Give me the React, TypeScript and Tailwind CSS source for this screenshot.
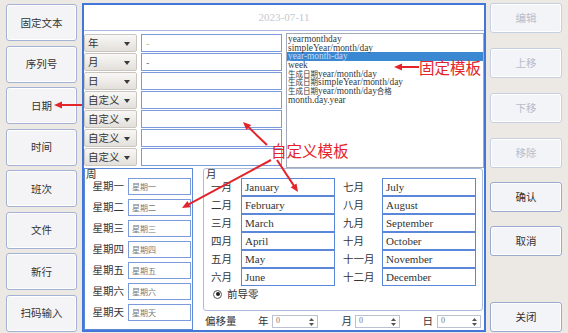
import React from "react";

const RED = "#e3242b";

function LBtn({ children }: { children: React.ReactNode }) {
  return (
    <div className="w-[71px] h-[37px] shrink-0 rounded-[3px] border border-[#a3b2d3] bg-[#f4f4f7] shadow-[inset_0_0_0_1px_#ffffff] flex items-center justify-center text-[10.5px] text-[#333]">
      {children}
    </div>
  );
}

function RBtn({ children, disabled, mt }: { children: React.ReactNode; disabled?: boolean; mt: string }) {
  return (
    <div
      className={
        mt +
        " w-[72px] h-[30px] shrink-0 rounded-[3px] border flex items-center justify-center text-[10.5px] shadow-[inset_0_0_0_1px_#ffffff] " +
        (disabled ? "border-[#c6cfe2] bg-[#f3f4f7] text-[#b7bdcb]" : "border-[#9aaacd] bg-[#f3f4f8] text-[#333]")
      }
    >
      {children}
    </div>
  );
}

function Sel({ label }: { label: string }) {
  return (
    <div className="relative w-[53px] h-[18px] shrink-0 rounded-[2px] border border-[#c9c6c0] bg-linear-to-b from-[#f9f8f6] to-[#e3e0db] flex items-center pl-[3px] text-[10.5px] leading-none text-[#333]">
      <span>{label}</span>
      <svg className="absolute right-[6px] top-[7px]" width="6" height="4" viewBox="0 0 6 4">
        <path d="M0 0 L6 0 L3 4 Z" fill="#3a3a3a" />
      </svg>
    </div>
  );
}

function Spin({ w }: { w: string }) {
  return (
    <div className={w + " relative h-[13px] shrink-0 border border-[#b9c1d2] bg-white flex items-center pl-[3px] text-[8px] leading-none text-[#777] font-['Liberation_Serif',serif]"}>
      0
      <svg className="absolute right-[3px] top-[2px]" width="5" height="8" viewBox="0 0 5 8">
        <path d="M0 3 L2.5 0 L5 3 Z" fill="#555" />
        <path d="M0 5 L2.5 8 L5 5 Z" fill="#555" />
      </svg>
    </div>
  );
}

function Arrow({ x1, y1, x2, y2 }: { x1: number; y1: number; x2: number; y2: number }) {
  const dx = x2 - x1;
  const dy = y2 - y1;
  const len = Math.hypot(dx, dy);
  const ux = dx / len;
  const uy = dy / len;
  const hl = 8;
  const hw = 3.5;
  const bx = x2 - ux * hl;
  const by = y2 - uy * hl;
  const px = -uy;
  const py = ux;
  return (
    <g>
      <line x1={x1} y1={y1} x2={bx + ux} y2={by + uy} stroke={RED} strokeWidth={2} />
      <polygon
        points={`${x2},${y2} ${bx + px * hw},${by + py * hw} ${bx - px * hw},${by - py * hw}`}
        fill={RED}
      />
    </g>
  );
}

function ListText({ t }: { t: string }) {
  const parts = t.split(/([\u4e00-\u9fff]+)/).filter((p) => p.length > 0);
  return (
    <>
      {parts.map((p, i) =>
        /[\u4e00-\u9fff]/.test(p) ? (
          <span key={i} className="inline-block align-top h-[8.7px] leading-[8.7px] overflow-visible font-['Noto_Sans_CJK_SC',sans-serif] text-[7.5px]">
            {p}
          </span>
        ) : (
          <span key={i} className="inline-block align-top h-[8.7px] leading-[8.7px]">
            {p}
          </span>
        )
      )}
    </>
  );
}

const rows: { sel: string; val: string; col: string }[] = [
  { sel: "年", val: "-", col: "text-[#b9a870]" },
  { sel: "月", val: "-", col: "text-[#666]" },
  { sel: "日", val: "", col: "" },
  { sel: "自定义", val: "", col: "" },
  { sel: "自定义", val: "", col: "" },
  { sel: "自定义", val: "", col: "" },
  { sel: "自定义", val: "", col: "" },
];

const listItems = [
  "yearmonthday",
  "simpleYear/month/day",
  "year-month-day",
  "week",
  "生成日期year/month/day",
  "生成日期simpleYear/month/day",
  "生成日期year/month/day合格",
  "month.day.year",
];

const weeks = ["星期一", "星期二", "星期三", "星期四", "星期五", "星期六", "星期天"];

const months: [string, string, string, string][] = [
  ["一月", "January", "七月", "July"],
  ["二月", "February", "八月", "August"],
  ["三月", "March", "九月", "September"],
  ["四月", "April", "十月", "October"],
  ["五月", "May", "十一月", "November"],
  ["六月", "June", "十二月", "December"],
];

export default function App() {
  return (
    <div className="relative w-[568px] h-[333px] overflow-hidden bg-[#ece9e4] flex font-['Noto_Sans_CJK_SC',sans-serif] text-[#333]">
      {/* left column */}
      <div className="w-[82px] shrink-0 flex flex-col gap-[4.5px] pl-[6px] pt-[4px]">
        <LBtn>固定文本</LBtn>
        <LBtn>序列号</LBtn>
        <LBtn>日期</LBtn>
        <LBtn>时间</LBtn>
        <LBtn>班次</LBtn>
        <LBtn>文件</LBtn>
        <LBtn>新行</LBtn>
        <LBtn>扫码输入</LBtn>
      </div>

      {/* main panel */}
      <div className="mt-[3px] w-[404px] h-[329px] shrink-0 border-2 border-[#4277d8] bg-white flex flex-col">
        <div className="h-[26px] shrink-0 border-b border-[#a9bbe0] flex items-center justify-center text-[11px] text-[#c4c8d1] font-['Liberation_Serif',serif]">
          2023-07-11
        </div>

        <div className="h-[137px] shrink-0 flex">
          <div className="w-[198px] shrink-0 flex flex-col gap-[1px] pt-[3px]">
            {rows.map((r, i) => (
              <div key={i} className="h-[18px] flex">
                <Sel label={r.sel} />
                <div className={"ml-[4px] w-[141px] h-[18px] border border-[#7b9bdc] bg-white flex items-center pl-[4px] text-[10px] leading-none " + r.col}>
                  {r.val}
                </div>
              </div>
            ))}
          </div>
          <div className="ml-[4px] mt-[2px] w-[198px] h-[135px] border border-[#a3abbb] bg-white pt-[1px] font-['Liberation_Serif',serif] text-[9.4px] leading-[8.7px] text-[#3a3a3a]">
            {listItems.map((t, i) => (
              <div
                key={i}
                className={"h-[8.7px] pl-[1px] whitespace-nowrap overflow-visible " + (i === 2 ? "bg-[#3a87d2] text-[#c7ddf3]" : "")}
              >
                <ListText t={t} />
              </div>
            ))}
          </div>
        </div>

        <div className="flex-1 flex">
          {/* week group */}
          <div className="w-[109px] h-[162px] shrink-0 border border-[#5e88d8] flex flex-col">
            <div className="h-[9px] pl-[1px] text-[10.5px] leading-[9px]">周</div>
            <div className="flex flex-col gap-[4px]">
              {weeks.map((w) => (
                <div key={w} className="h-[17px] flex items-center">
                  <div className="w-[43px] pr-[4px] text-right text-[10.5px] leading-none">{w}</div>
                  <div className="w-[63px] h-[17px] border border-[#7b9bdc] bg-white flex items-center pl-[3px] text-[8px] leading-none text-[#777]">
                    {w}
                  </div>
                </div>
              ))}
            </div>
          </div>

          {/* month + offset */}
          <div className="ml-[10px] w-[281px] shrink-0 flex flex-col">
            <div className="w-[280px] h-[143px] rounded-[3px] border border-[#aabbdc] flex flex-col">
              <div className="h-[9px] pl-[2px] text-[10.5px] leading-[9px]">月</div>
              <div className="flex flex-col">
                {months.map((m) => (
                  <div key={m[0]} className="h-[18px] flex items-center pl-[7px]">
                    <div className="w-[30px] text-[10.5px] leading-none">{m[0]}</div>
                    <div className="w-[94px] h-[18px] border border-[#5b87da] bg-white flex items-center pl-[3px] text-[11px] leading-none font-['Liberation_Serif',serif] text-[#333]">
                      {m[1]}
                    </div>
                    <div className="ml-[8px] w-[39px] text-[10.5px] leading-none">{m[2]}</div>
                    <div className="w-[94px] h-[18px] border border-[#5b87da] bg-white flex items-center pl-[3px] text-[11px] leading-none font-['Liberation_Serif',serif] text-[#333]">
                      {m[3]}
                    </div>
                  </div>
                ))}
              </div>
              <div className="mt-[3px] h-[10px] flex items-center pl-[9px]">
                <div className="w-[9px] h-[9px] rounded-full border border-[#555] bg-white flex items-center justify-center">
                  <div className="w-[4px] h-[4px] rounded-full bg-[#222]" />
                </div>
                <span className="ml-[5px] text-[10.5px] leading-none">前导零</span>
              </div>
            </div>
            <div className="flex-1 flex items-center text-[10.5px] leading-none pl-[2px] pt-[1px]">
              <span className="w-[53px]">偏移量</span>
              <span className="w-[14px]">年</span>
              <Spin w="w-[46px]" />
              <span className="w-[37px] pr-[3px] text-right">月</span>
              <Spin w="w-[45px]" />
              <span className="w-[37px] pr-[4px] text-right">日</span>
              <Spin w="w-[44px]" />
            </div>
          </div>
        </div>
      </div>

      {/* right column */}
      <div className="ml-[4px] w-[72px] shrink-0 flex flex-col pt-[3px]">
        <RBtn disabled mt="mt-0">编辑</RBtn>
        <RBtn disabled mt="mt-[15px]">上移</RBtn>
        <RBtn disabled mt="mt-[15px]">下移</RBtn>
        <RBtn disabled mt="mt-[15px]">移除</RBtn>
        <RBtn mt="mt-[14px]">确认</RBtn>
        <RBtn mt="mt-[14px]">取消</RBtn>
        <RBtn mt="mt-[46px]">关闭</RBtn>
      </div>

      {/* annotations */}
      <svg className="absolute left-0 top-0 pointer-events-none" width="568" height="333" viewBox="0 0 568 333">
        <Arrow x1={82} y1={105} x2={54} y2={105} />
        <Arrow x1={419} y1={67} x2={394} y2={67} />
        <Arrow x1={267} y1={145} x2={243} y2={122} />
        <Arrow x1={271} y1={160} x2={182} y2={208} />
        <Arrow x1={277} y1={160} x2={298} y2={192} />
      </svg>
      <div className="absolute left-[419px] top-[58px] text-[15.5px] leading-[18px] text-[#e3242b] whitespace-nowrap">固定模板</div>
      <div className="absolute left-[271px] top-[141px] text-[15.5px] leading-[18px] text-[#e3242b] whitespace-nowrap">自定义模板</div>
    </div>
  );
}
